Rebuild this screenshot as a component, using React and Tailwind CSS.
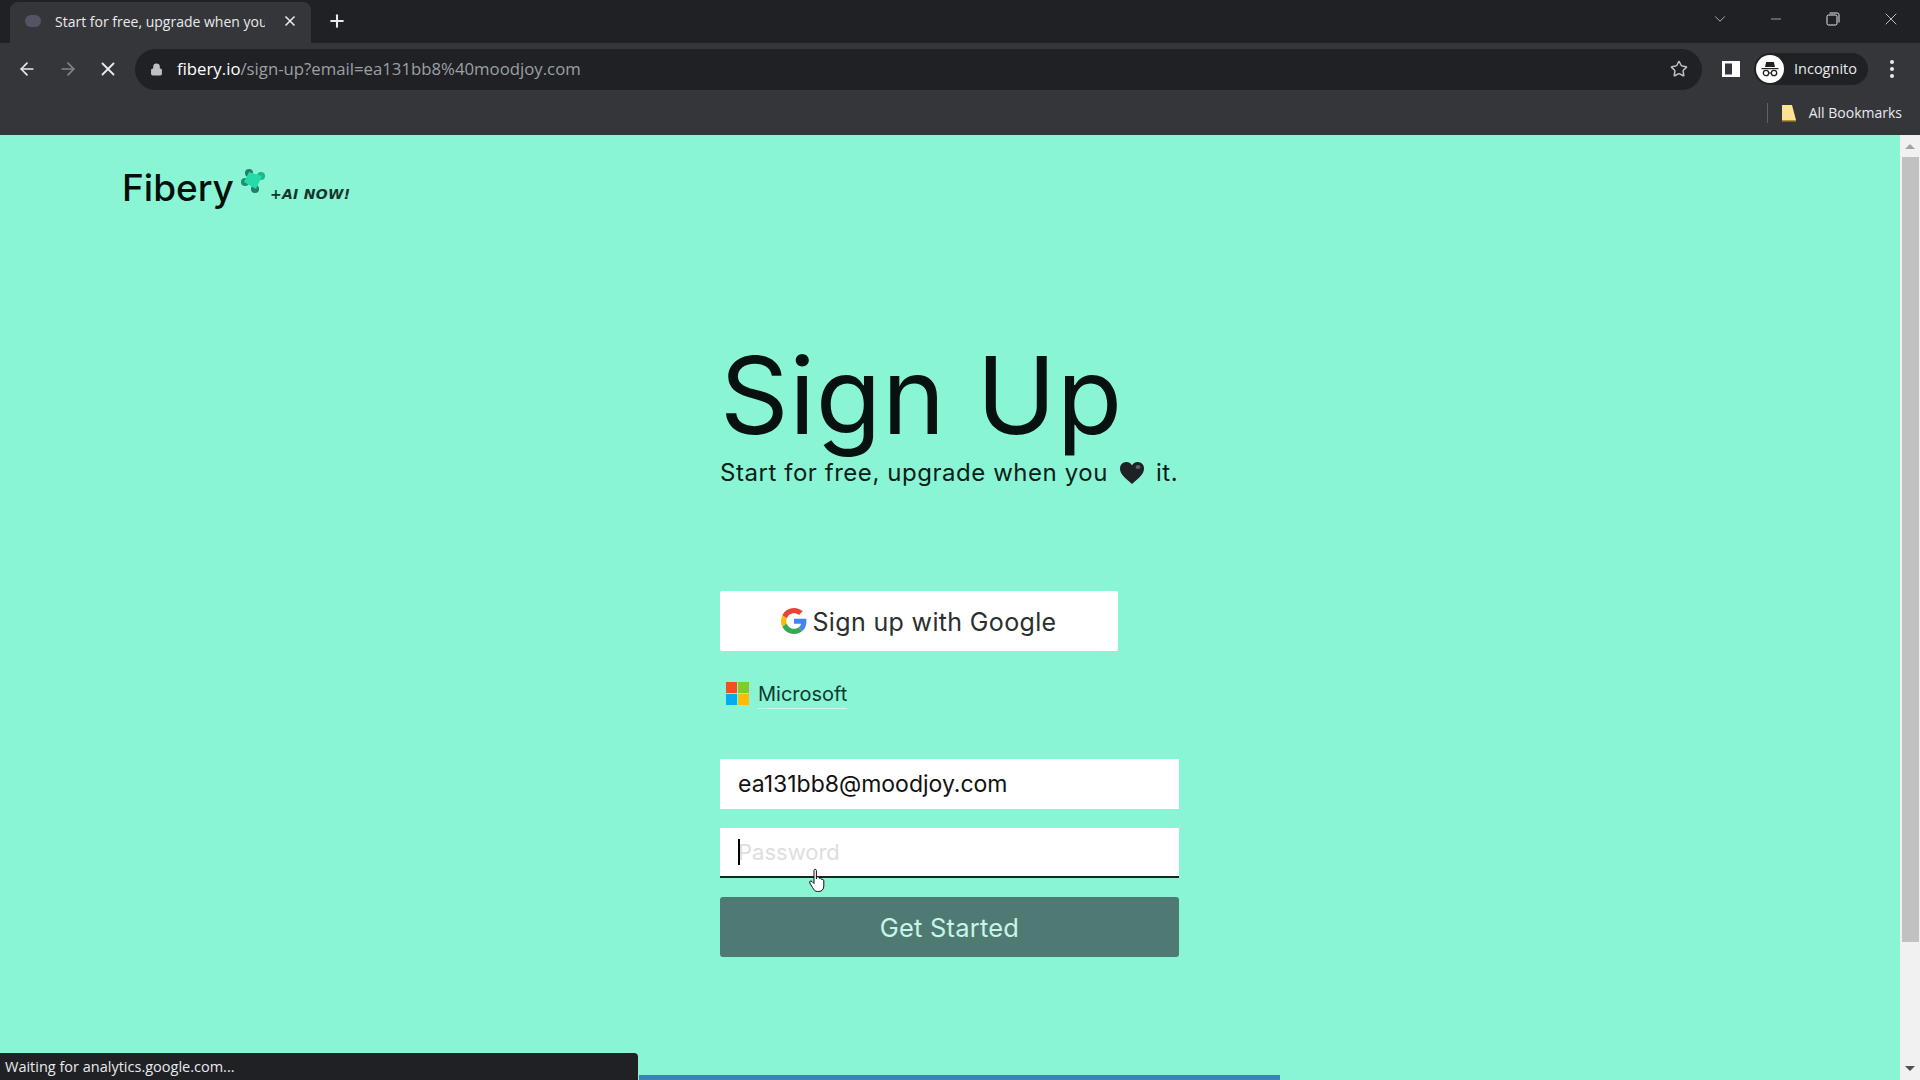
import React from "react";
import { ArrowLeft, ArrowRight, X, Plus, Lock, Star, ChevronDown, Minus } from "lucide-react";

const ui = { fontFamily: '"Open Sans", "Noto Sans", sans-serif' };
const page = { fontFamily: 'Inter, "Noto Sans", sans-serif' };

function Clover() {
  return (
    <svg width="26" height="26" viewBox="0 0 26 26">
      <circle cx="9" cy="5" r="4" fill="#1f7f68" />
      <circle cx="21" cy="8" r="4" fill="#1fb58c" />
      <circle cx="5" cy="14" r="4" fill="#1f8f74" />
      <circle cx="15" cy="21" r="4" fill="#1f7f68" />
      <path d="M9 4L22 8L16 21L4 14Z" fill="#25dca8" />
    </svg>
  );
}

function GoogleG() {
  return (
    <svg width="26" height="26" viewBox="0 0 48 48">
      <path fill="#EA4335" d="M24 9.5c3.5 0 6.7 1.2 9.2 3.6l6.9-6.9C35.9 2.4 30.5 0 24 0 14.6 0 6.5 5.4 2.6 13.2l8 6.2C12.4 13.7 17.7 9.5 24 9.5z" />
      <path fill="#4285F4" d="M46.98 24.55c0-1.57-.15-3.09-.38-4.55H24v9.02h12.94c-.58 2.96-2.26 5.48-4.78 7.18l7.73 6c4.51-4.18 7.09-10.36 7.09-17.65z" />
      <path fill="#FBBC05" d="M10.53 28.59A14.5 14.5 0 0 1 9.77 24c0-1.6.27-3.14.76-4.59l-7.98-6.19A24 24 0 0 0 0 24c0 3.88.92 7.54 2.56 10.78l7.97-6.19z" />
      <path fill="#34A853" d="M24 48c6.48 0 11.93-2.13 15.89-5.81l-7.73-6c-2.15 1.45-4.92 2.3-8.16 2.3-6.26 0-11.57-4.22-13.47-9.91l-7.98 6.19C6.51 42.62 14.62 48 24 48z" />
    </svg>
  );
}

function Hand() {
  return (
    <svg width="20" height="26" viewBox="0 0 20 26">
      <path d="M6 2.5c0-1.6 2.4-1.6 2.4 0V11l.6-2.4c1.6-.5 2 .4 2 1.4l.4.2c1.4-.5 2 .3 2 1.2l.4.1c1.4-.3 2 .5 2 1.5v5c0 3-1.8 5.5-5 5.5H9.500C7 23.500 6 22 4.500 19.500L1.800 15c-.9-1.700 1-2.800 2.200-1.500L6 15.500Z" fill="#fff" stroke="#111" strokeWidth="1" />
    </svg>
  );
}

export default function App() {
  return (
    <div className="w-[1920px] h-[1080px] overflow-hidden flex flex-col bg-[#35363a]" style={ui}>
      {/* Tab strip */}
      <div className="h-[43px] bg-[#202124] flex items-end pl-[10px] text-white shrink-0">
        <div className="w-[301px] h-[41px] bg-[#35363a] rounded-t-[8px] flex items-center pl-[15px] pb-[3px]">
          <div className="w-[16px] h-[12px] rounded-full bg-[#5b5e70] opacity-80 shrink-0" />
          <span className="ml-[14px] text-[14px] text-[#e8eaed] whitespace-nowrap overflow-hidden w-[210px] shrink-0">Start for free, upgrade when you</span>
          <X size={16} strokeWidth={2.5} className="ml-[17px] shrink-0 text-[#e8eaed]" />
        </div>
        <Plus size={20} strokeWidth={2.5} className="ml-[16px] mb-[12px] text-[#e8eaed]" />
        <div className="ml-auto flex items-center h-[43px] pb-[6px] text-[#dadce0]">
          <ChevronDown size={18} strokeWidth={1} className="mr-[39px]" />
          <Minus size={16} strokeWidth={1} className="mr-[42px]" />
          <svg width="14" height="14" viewBox="0 0 14 14" fill="none" stroke="#e8eaed" className="mr-[41px]">
            <rect x="1" y="3" width="10" height="10" rx="1.500" />
            <path d="M3.500 1H11.500A1.500 1.500 0 0 1 13 2.500V10.500" />
          </svg>
          <X size={20} strokeWidth={1} className="mr-[19px]" />
        </div>
      </div>

      {/* Address bar */}
      <div className="h-[52px] flex items-center text-[#e8eaed] shrink-0">
        <ArrowLeft size={20} className="ml-[17px]" />
        <ArrowRight size={20} className="ml-[21px] text-[#80868b]" />
        <X size={22} className="ml-[19px]" />
        <div className="ml-[16px] w-[1567px] h-[41px] rounded-full bg-[#202124] flex items-center pl-[15px] pr-[14px]">
          <Lock size={13} fill="#bdc1c6" className="text-[#bdc1c6]" />
          <span className="ml-[14px] text-[16.75px] text-white">fibery.io</span>
          <span className="text-[16.75px] text-[#9aa0a6]">/sign-up?email=ea131bb8%40moodjoy.com</span>
          <Star size={18} className="ml-auto text-[#bdc1c6]" />
        </div>
        <svg width="18" height="16" viewBox="0 0 18 16" className="ml-[20px]">
          <rect x="0" y="0" width="18" height="16" fill="#fff" />
          <rect x="3" y="2.500" width="7" height="11" fill="#35363a" />
        </svg>
        <div className="ml-[14px] w-[114px] h-[32px] rounded-full bg-[#202124] flex items-center">
          <div className="w-[28px] h-[28px] rounded-full bg-white flex items-center justify-center ml-[2px]">
            <svg width="22" height="22" viewBox="0 0 22 22" fill="#202124">
              <path d="M2.500 10h17v1.200h-17z" />
              <path d="M6 9l1.200-5h7.600l1.200 5z" />
              <circle cx="7" cy="15" r="2.700" fill="none" stroke="#202124" strokeWidth="1.300" />
              <circle cx="15" cy="15" r="2.700" fill="none" stroke="#202124" strokeWidth="1.300" />
              <path d="M9.500 14.500h3v1h-3z" />
            </svg>
          </div>
          <span className="ml-[10px] text-[14.5px] text-[#e8eaed]">Incognito</span>
        </div>
        <div className="ml-[22px] flex flex-col gap-[3px]">
          <span className="w-[4px] h-[4px] rounded-full bg-[#e8eaed]" />
          <span className="w-[4px] h-[4px] rounded-full bg-[#e8eaed]" />
          <span className="w-[4px] h-[4px] rounded-full bg-[#e8eaed]" />
        </div>
      </div>

      {/* Bookmarks bar */}
      <div className="h-[40px] flex items-center justify-end pr-[18px] pb-[4px] border-b border-[#2a3a38] shrink-0">
        <div className="w-px h-[20px] bg-[#5f6368] mr-[13px]" />
        <svg width="16" height="18" viewBox="0 0 16 18" className="mr-[12px]">
          <path d="M1 1h10l4 15H1Z" fill="#fde293" />
          <path d="M1 16h14v1.500H1Z" fill="#b8942f" />
        </svg>
        <span className="text-[14px] text-[#e8eaed]">All Bookmarks</span>
      </div>

      {/* Viewport */}
      <div className="relative flex-1 flex min-h-0">
        <div className="relative flex-1 bg-[#8af5d4] flex flex-col min-h-0 text-[#0c1512]" style={page}>
          <div className="h-[81px] pl-[122px] pt-[30px] flex items-start shrink-0">
            <span className="text-[37px] leading-[46px] font-medium text-[#070f0d]">Fibery</span>
            <div className="ml-[6px] mt-[3px]"><Clover /></div>
            <span className="ml-[4px] mt-[19px] text-[14px] leading-[20px] font-bold italic tracking-[0.3px] whitespace-nowrap text-[#17342d]" style={{ fontFamily: '"DejaVu Sans", sans-serif' }}>+AI NOW!</span>
          </div>

          <div className="mx-auto w-[460px] flex flex-col flex-1 min-h-0">
            <h1 className="text-[107px] leading-[104px] font-normal tracking-[0.6px] mt-[127px] text-[#07110f] whitespace-nowrap">Sign Up</h1>
            <p className="text-[24px] leading-[32px] tracking-[0.55px] mt-[10px] whitespace-nowrap flex items-center text-[#0c2019]">
              Start for free, upgrade when you
              <svg width="26" height="24" viewBox="0 0 26 24" className="ml-[11px] mr-[11px]">
                <path d="M13 23C6 17 1 13 1 7.500C1 3 4.500 1 7.500 1C10 1 12 2.500 13 4.500C14 2.500 16 1 18.500 1C21.500 1 25 3 25 7.500C25 13 20 17 13 23Z" fill="#1e2126" />
                <ellipse cx="19" cy="6" rx="2.500" ry="2" fill="#5e6169" />
              </svg>
              it.
            </p>

            <button className="mt-[102px] w-[398px] h-[60px] bg-white rounded-[2px] flex items-center justify-center gap-[5px] text-[25px] tracking-[0.35px] text-[#2b2f2e]">
              <GoogleG />
              <span className="pt-[3px]">Sign up with Google</span>
            </button>

            <div className="mt-[31px] ml-[6px] h-[23px] flex items-center">
              <svg width="23" height="23" viewBox="0 0 23 23">
                <rect x="0" y="0" width="11" height="11" fill="#f1511b" />
                <rect x="12" y="0" width="11" height="11" fill="#80cc28" />
                <rect x="0" y="12" width="11" height="11" fill="#00adef" />
                <rect x="12" y="12" width="11" height="11" fill="#fbbc09" />
              </svg>
              <span className="ml-[9px] mt-[2px] text-[20px] leading-[27px] border-b border-[#c4fbea] text-[#0f3a30]">Microsoft</span>
            </div>

            <input readOnly defaultValue="ea131bb8@moodjoy.com" className="mt-[54px] w-[459px] h-[50px] bg-white px-[18px] text-[23px] text-[#111] outline-none shrink-0" />

            <div className="relative mt-[19px] w-[459px] shrink-0">
              <input readOnly placeholder="Password" className="w-full h-[50px] bg-white px-[18px] text-[22px] border-b-2 border-[#1a2522] outline-none placeholder:text-[#dedede]" />
              <span className="absolute left-[18px] top-[11px] w-[2px] h-[26px] bg-black" />
              <span className="absolute left-[88px] top-[40px]"><Hand /></span>
            </div>

            <button className="mt-[19px] pt-[2px] w-[459px] h-[60px] bg-[#4f7a74] rounded-[3px] text-[25.5px] tracking-[0.2px] text-[#c8f5e6] shrink-0">Get Started</button>
          </div>

          <div className="ml-[639px] w-[641px] h-[5px] bg-[#3b7fc4] shrink-0" />

          <div className="absolute left-0 bottom-0 w-[638px] h-[27px] bg-[#202124] rounded-tr-[4px] flex items-center pl-[5px] text-[14.5px] text-[#e8eaed]" style={ui}>
            Waiting for analytics.google.com...
          </div>
        </div>

        {/* Scrollbar */}
        <div className="w-[20px] bg-[#f1f1f1] flex flex-col items-center shrink-0">
          <div className="h-[22px] flex items-center">
            <div className="w-0 h-0 border-l-[5px] border-r-[5px] border-b-[5px] border-l-transparent border-r-transparent border-b-[#a3a3a3]" />
          </div>
          <div className="w-[17px] h-[785px] bg-[#c1c1c1]" />
          <div className="mt-auto mb-[9px] w-0 h-0 border-l-[5px] border-r-[5px] border-t-[5px] border-l-transparent border-r-transparent border-t-[#505050]" />
        </div>
      </div>
    </div>
  );
}
